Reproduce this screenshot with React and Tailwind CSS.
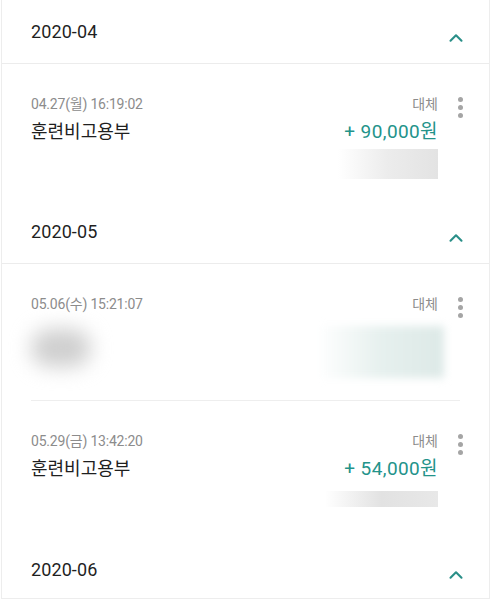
import { ChevronUp } from "lucide-react";

const FONT = { fontFamily: "Roboto, 'Noto Sans CJK KR', sans-serif" };

const sections = [
  {
    month: "2020-04",
    items: [
      { date: "04.27(월) 16:19:02", name: "훈련비고용부", amount: "+ 90,000원", memo: "bar" },
    ],
  },
  {
    month: "2020-05",
    items: [
      { date: "05.06(수) 15:21:07", hidden: true },
      { date: "05.29(금) 13:42:20", name: "훈련비고용부", amount: "+ 54,000원", memo: "thin" },
    ],
  },
];

function Dots() {
  return (
    <div className="flex flex-col items-center gap-[3px] pt-[2px]">
      <span className="w-[5px] h-[5px] rounded-full bg-[#a5a5a5]" />
      <span className="w-[5px] h-[5px] rounded-full bg-[#a5a5a5]" />
      <span className="w-[5px] h-[5px] rounded-full bg-[#a5a5a5]" />
    </div>
  );
}

function Header({ month, last }) {
  return (
    <div className={`h-16 flex items-center justify-between pl-[29px] pr-[22px] ${last ? "" : "border-b border-[#ececec]"}`}>
      <span className="text-[18px] text-[#1f1f1f] tracking-[0.1px]">{month}</span>
      <ChevronUp className="w-[22px] h-[22px] text-[#2a8f88] mt-[12px]" strokeWidth={2.3} />
    </div>
  );
}

function Item({ it }) {
  return (
    <div className="h-[136px]">
      <div className="flex pl-[29px] pr-[18px] pt-[31px]">
        <div className="flex-1">
          <div className="text-[14px] text-[#8c8c8c] leading-[18px] tracking-[-0.2px]">{it.date}</div>
          {it.hidden ? (
            <div className="mt-[8px] -ml-[10px] w-[80px] h-[54px] flex items-center justify-center">
              <div className="w-[60px] h-[38px] rounded-full bg-[#cfcfcf] blur-[10px]" />
            </div>
          ) : (
            <div className="mt-[8px] text-[18px] text-[#1f1f1f] leading-[22px]">{it.name}</div>
          )}
        </div>
        <div className="flex flex-col items-end">
          <div className="text-[14px] text-[#8c8c8c] leading-[18px]">대체</div>
          {it.hidden ? (
            <div className="mt-[13px] -mr-[6px] w-[126px] h-[52px] bg-gradient-to-r from-white via-[#e6f0ee] to-[#dde9e7] blur-[4px]" />
          ) : (
            <>
              <div className="mt-[7px] text-[19px] text-[#23938a] leading-[23px] tracking-[0.4px]">{it.amount}</div>
              {it.memo === "bar" ? (
                <div className="mt-[6px] w-[100px] h-[30px] bg-gradient-to-r from-white via-[#ececec] to-[#e3e3e3]" />
              ) : (
                <div className="mt-[11px] w-[113px] h-[16px] bg-gradient-to-r from-white via-[#e2e2e2] to-[#e8e8e8]" />
              )}
            </>
          )}
        </div>
        <div className="w-[22px] ml-[11px] flex justify-center">
          <Dots />
        </div>
      </div>
    </div>
  );
}

export default function App() {
  return (
    <div className="w-[491px] h-[600px] bg-white overflow-hidden" style={FONT}>
      <div className="mx-[1px] h-[599px] border-x border-b border-[#ededed] bg-white">
        {sections.map((s) => (
          <div key={s.month}>
            <Header month={s.month} />
            {s.items.map((it, i) => (
              <div key={it.date}>
                {i > 0 && <div className="mx-[29px] border-t border-[#eeeeee]" />}
                <Item it={it} />
              </div>
            ))}
          </div>
        ))}
        <Header month="2020-06" last />
      </div>
    </div>
  );
}
